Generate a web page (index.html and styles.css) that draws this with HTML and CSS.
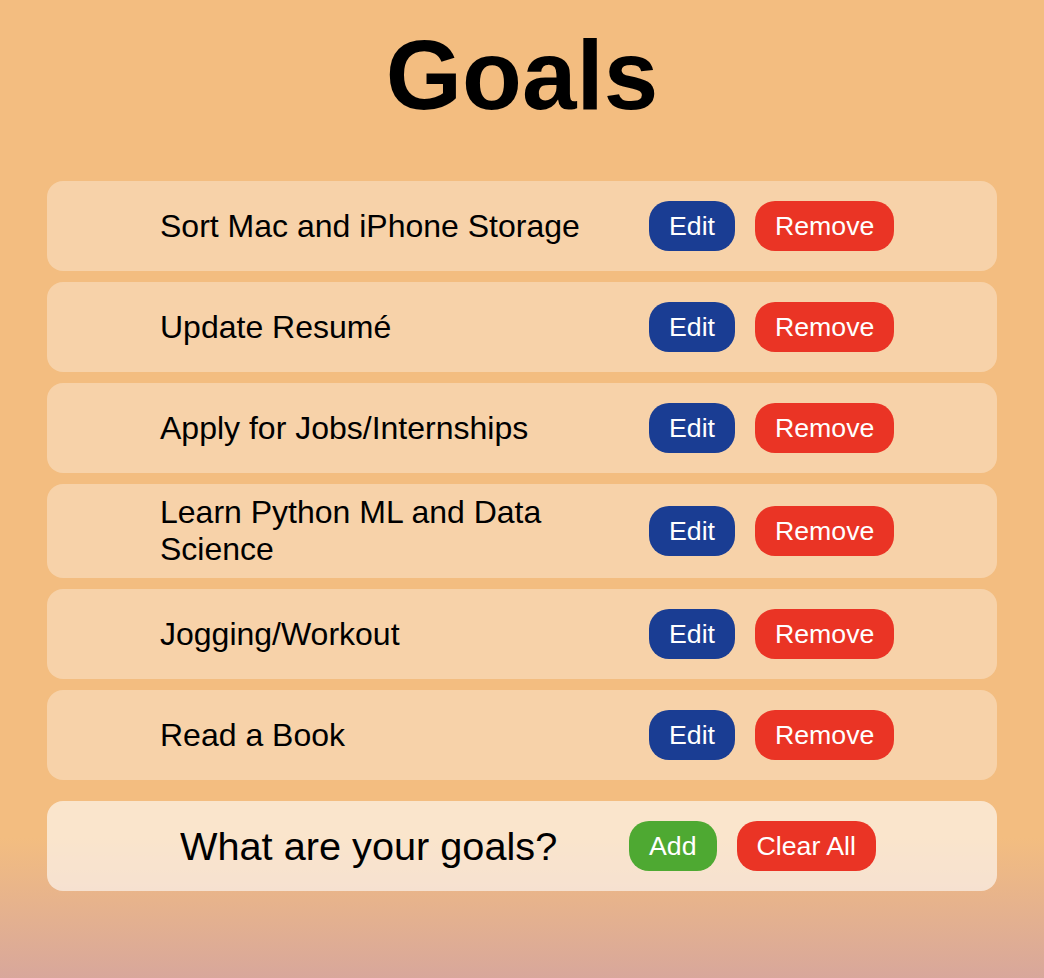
FILE: index.html
```html
<!DOCTYPE html>
<html lang="en">
<head>
<meta charset="utf-8">
<title>Goals</title>
<link rel="stylesheet" href="styles.css">
</head>
<body>
<h1 class="title">Goals</h1>
<ul class="goal-list">
  <li class="goal-card"><span class="goal-text">Sort Mac and iPhone Storage</span><button class="btn btn-edit">Edit</button><button class="btn btn-remove">Remove</button></li>
  <li class="goal-card"><span class="goal-text">Update Resumé</span><button class="btn btn-edit">Edit</button><button class="btn btn-remove">Remove</button></li>
  <li class="goal-card"><span class="goal-text">Apply for Jobs/Internships</span><button class="btn btn-edit">Edit</button><button class="btn btn-remove">Remove</button></li>
  <li class="goal-card"><span class="goal-text">Learn Python ML and Data Science</span><button class="btn btn-edit">Edit</button><button class="btn btn-remove">Remove</button></li>
  <li class="goal-card"><span class="goal-text">Jogging/Workout</span><button class="btn btn-edit">Edit</button><button class="btn btn-remove">Remove</button></li>
  <li class="goal-card"><span class="goal-text">Read a Book</span><button class="btn btn-edit">Edit</button><button class="btn btn-remove">Remove</button></li>
</ul>
<form class="add-card">
  <input class="goal-input" type="text" placeholder="What are your goals?">
  <button type="button" class="btn btn-add">Add</button>
  <button type="button" class="btn btn-remove">Clear All</button>
</form>
</body>
</html>
```
FILE: styles.css
```css
html {
  min-height: 100%;
  background: linear-gradient(to bottom, #f3bd80 0, #f3bd80 838px, #d8a79b 978px);
}
body {
  margin: 0;
  font-family: "Liberation Sans", Arial, sans-serif;
  color: #000;
}
.title {
  margin: 19px 0 0;
  font-size: 98px;
  font-weight: bold;
  text-align: center;
  line-height: 113px;
}
.goal-list {
  list-style: none;
  margin: 49px auto 0;
  padding: 0;
  width: 950px;
  display: flex;
  flex-direction: column;
  gap: 11px;
}
.goal-card {
  display: flex;
  align-items: center;
  gap: 20px;
  padding: 10px 0 10px 113px;
  background: rgba(255, 255, 255, 0.32);
  border-radius: 16px;
}
.goal-text {
  width: 469px;
  font-size: 32px;
}
.btn {
  margin: 10px 0;
  padding: 10px 20px;
  border: none;
  border-radius: 20px;
  font-family: "Liberation Sans", Arial, sans-serif;
  font-size: 26.7px;
  color: #fff;
  line-height: 30px;
}
.btn-edit { background: #1a3d93; }
.btn-remove { background: #ea3425; }
.btn-add { background: #4ea932; }
.add-card {
  width: 950px;
  margin: 21px auto 0;
  box-sizing: border-box;
  display: flex;
  align-items: center;
  gap: 20px;
  padding: 10px 0 10px 133px;
  background: rgba(255, 255, 255, 0.6);
  border-radius: 16px;
}
.goal-input {
  width: 429px;
  padding: 0;
  border: none;
  background: transparent;
  font-family: "Liberation Sans", Arial, sans-serif;
  font-size: 39.7px;
  outline: none;
}
.goal-input::placeholder {
  color: #000;
}
```
